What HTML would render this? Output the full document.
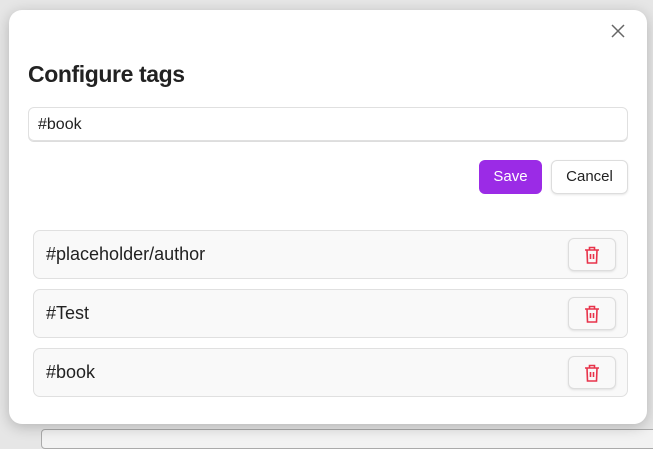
<!DOCTYPE html>
<html><head><style>
*{box-sizing:border-box;margin:0;padding:0}
body{width:653px;height:439px;background:#e6e6e6;font-family:"Liberation Sans",sans-serif;position:relative;overflow:hidden}
.bgline{position:absolute;left:41px;top:429px;width:620px;height:20px;border:1px solid #aaa;border-radius:4px;background:#f2f2f2}
.modal{position:absolute;left:9px;top:10px;width:638px;height:414px;background:#fff;border-radius:13px;box-shadow:0 3px 14px rgba(0,0,0,.22)}
.x{position:absolute;left:602px;top:14px}
h1{position:absolute;left:19px;top:51px;font-size:23px;font-weight:bold;color:#222;letter-spacing:-0.4px}
.inp{position:absolute;left:19px;top:97px;width:600px;height:34px;border:1px solid #e0e0e0;border-radius:6px;font-size:16px;color:#222;padding:8px 9px;box-shadow:0 1px 0 #ddd}
.save{position:absolute;left:470px;top:150px;width:63px;height:34px;background:#9b2be6;color:#fff;border-radius:6px;font-size:15px;text-align:center;line-height:34px}
.cancel{position:absolute;left:542px;top:150px;width:77px;height:34px;border:1px solid #ddd;border-radius:6px;font-size:15px;text-align:center;line-height:32px;color:#222;box-shadow:0 1px 2px rgba(0,0,0,.1)}
.row{position:absolute;left:24px;width:595px;height:49px;background:#f9f9f9;border:1px solid #e0e0e0;border-radius:7px;font-size:18px;color:#222;padding:13px 12px}
.del{position:absolute;left:534px;top:7px;width:48px;height:33px;border:1px solid #ddd;border-radius:6px;background:#f9f9f9;box-shadow:0 1px 2px rgba(0,0,0,.1)}
.del svg{position:absolute;left:15px;top:7px}
</style></head><body>
<div class="bgline"></div>
<div class="modal">
<svg class="x" width="14" height="14" viewBox="0 0 14 14"><path d="M1 1L13 13M13 1L1 13" stroke="#666" stroke-width="1.5"/></svg>
<h1>Configure tags</h1>
<div class="inp">#book</div>
<div class="save">Save</div>
<div class="cancel">Cancel</div>
<div class="row" style="top:220px">#placeholder/author<div class="del"><svg width="16" height="18" viewBox="0 0 16 18"><path d="M1 4H15M5.5 4V1.5H10.5V4M3 4L3.5 17H12.5L13 4M6.5 8V13M9.5 8V13" fill="none" stroke="#e8334a" stroke-width="1.6"/></svg></div></div>
<div class="row" style="top:279px">#Test<div class="del"><svg width="16" height="18" viewBox="0 0 16 18"><path d="M1 4H15M5.5 4V1.5H10.5V4M3 4L3.5 17H12.5L13 4M6.5 8V13M9.5 8V13" fill="none" stroke="#e8334a" stroke-width="1.6"/></svg></div></div>
<div class="row" style="top:338px">#book<div class="del"><svg width="16" height="18" viewBox="0 0 16 18"><path d="M1 4H15M5.5 4V1.5H10.5V4M3 4L3.5 17H12.5L13 4M6.5 8V13M9.5 8V13" fill="none" stroke="#e8334a" stroke-width="1.6"/></svg></div></div>
</div>
</body></html>
